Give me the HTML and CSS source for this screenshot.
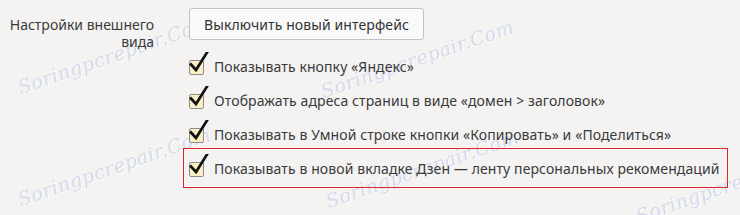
FILE: index.html
```html
<!DOCTYPE html>
<html lang="ru">
<head>
<meta charset="utf-8">
<title>Настройки внешнего вида</title>
<link rel="stylesheet" href="styles.css">
</head>
<body>
<div class="page">
  <div class="settings">
    <div class="label">Настройки внешнего вида</div>
    <div class="content">
      <button class="btn" type="button">Выключить новый интерфейс</button>
      <div class="options">
        <label class="row">
          <span class="check"><svg viewBox="0 0 22 22" width="22" height="22"><path d="M3 12.5 L8 18 L19 0.5" /></svg></span>
          <span class="text">Показывать кнопку «Яндекс»</span>
        </label>
        <label class="row">
          <span class="check"><svg viewBox="0 0 22 22" width="22" height="22"><path d="M3 12.5 L8 18 L19 0.5" /></svg></span>
          <span class="text">Отображать адреса страниц в виде «домен &gt; заголовок»</span>
        </label>
        <label class="row">
          <span class="check"><svg viewBox="0 0 22 22" width="22" height="22"><path d="M3 12.5 L8 18 L19 0.5" /></svg></span>
          <span class="text">Показывать в Умной строке кнопки «Копировать» и «Поделиться»</span>
        </label>
        <label class="row highlight">
          <span class="check"><svg viewBox="0 0 22 22" width="22" height="22"><path d="M3 12.5 L8 18 L19 0.5" /></svg></span>
          <span class="text">Показывать в новой вкладке Дзен — ленту персональных рекомендаций</span>
        </label>
      </div>
    </div>
  </div>
  <div class="wm wm1">Soringpcrepair.Com</div>
  <div class="wm wm2">Soringpcrepair.Com</div>
  <div class="wm wm3">Soringpcrepair.Com</div>
  <div class="wm wm4">Soringpcrepair.Com</div>
  <div class="wm wm5">Soringpcrepair.Com</div>
</div>
</body>
</html>
```
FILE: styles.css
```css
html, body {
  margin: 0;
  padding: 0;
  background: #f4f3f2;
}
.page {
  position: relative;
  width: 740px;
  height: 215px;
  overflow: hidden;
  font-family: "Noto Sans", "Open Sans", sans-serif;
  font-size: 14px;
  letter-spacing: 0.1px;
  color: #3a3a3a;
}
.settings {
  position: relative;
  z-index: 1;
  display: grid;
  grid-template-columns: 151px 1fr;
  column-gap: 35px;
  padding: 8px 0 0 3px;
}
.label {
  text-align: right;
  line-height: 17px;
  padding-top: 8px;
  letter-spacing: 0;
}
.content {
  display: flex;
  flex-direction: column;
  align-items: flex-start;
}
.btn {
  height: 32px;
  padding: 0 14px;
  font: inherit;
  letter-spacing: 0.1px;
  color: #333;
  background: #f9f9f9;
  border: 1px solid #c2c2c2;
  border-radius: 3px;
}
.options {
  display: flex;
  flex-direction: column;
  margin-top: 9px;
}
.row {
  display: flex;
  align-items: center;
  height: 34px;
  gap: 10px;
}
.check {
  position: relative;
  flex: none;
  width: 13px;
  height: 13px;
  margin-top: 3px;
  border: 1px solid #8c8c8c;
  border-radius: 2px;
  background: #fbefc4;
}
.check svg {
  position: absolute;
  left: -2px;
  top: -9px;
  fill: none;
  stroke: #111;
  stroke-width: 2.7;
  stroke-linecap: square;
  stroke-linejoin: miter;
}
.highlight {
  box-sizing: border-box;
  height: 40px;
  width: 545px;
  margin: -3px 0 0 -6px;
  padding-left: 5px;
  border: 1px solid #e0242c;
}
.wm {
  position: absolute;
  z-index: 0;
  font-family: "DejaVu Serif", serif;
  font-style: italic;
  font-size: 19px;
  letter-spacing: 0.5px;
  color: rgba(175, 190, 228, 0.5);
  text-shadow: 1px 1px 0 rgba(255,255,255,0.7);
  transform: rotate(-19deg);
  transform-origin: left bottom;
  white-space: nowrap;
  pointer-events: none;
}
.wm1 { left: 22px; top: 76px; }
.wm2 { left: 325px; top: 80px; }
.wm3 { left: 22px; top: 188px; }
.wm4 { left: 330px; top: 190px; }
.wm5 { left: 640px; top: 205px; }
```
